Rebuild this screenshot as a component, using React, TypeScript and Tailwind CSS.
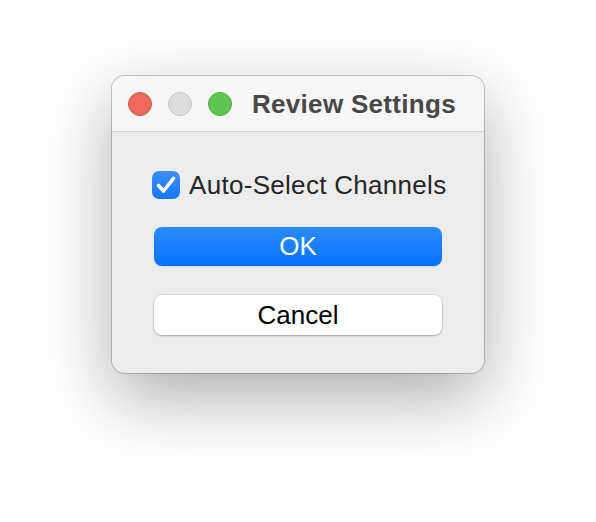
import { useState } from "react";

const font = { fontFamily: '"Liberation Sans", Arial, sans-serif' };

const TrafficLights = () => (
  <div className="flex items-center gap-4">
    <span className="h-6 w-6 rounded-full border border-[#d5574c] bg-[#ee6a5f]" />
    <span className="h-6 w-6 rounded-full border border-[#c4c4c4] bg-[#dcdcdc]" />
    <span className="h-6 w-6 rounded-full border border-[#4fa943] bg-[#60c454]" />
  </div>
);

const Checkbox = ({ checked, onToggle }: { checked: boolean; onToggle: () => void }) => (
  <button
    type="button"
    onClick={onToggle}
    className={
      checked
        ? "flex h-7 w-7 shrink-0 items-center justify-center rounded-[7px] bg-gradient-to-b from-[#3a90fb] to-[#1676f5]"
        : "flex h-7 w-7 shrink-0 items-center justify-center rounded-[7px] border border-[#b8b8b8] bg-white"
    }
  >
    {checked && (
      <svg viewBox="0 0 28 28" className="h-7 w-7">
        <path
          d="M6.5 14.5 L11.5 20 L21.5 7.5"
          fill="none"
          stroke="#fff"
          strokeWidth="3.6"
          strokeLinecap="round"
          strokeLinejoin="round"
        />
      </svg>
    )}
  </button>
);

export default function App() {
  const [autoSelect, setAutoSelect] = useState(true);

  return (
    <div className="h-[522px] w-[596px] bg-white pl-[112px] pt-[76px]" style={font}>
      <div className="w-[372px] overflow-hidden rounded-[13px] bg-[#ececec] shadow-[0_24px_70px_rgba(0,0,0,0.33),0_0_0_1px_rgba(0,0,0,0.2)]">
        {/* title bar */}
        <div className="flex h-[56px] items-center gap-5 border-b border-[#d4d4d4] bg-[#f6f6f6] pl-4">
          <TrafficLights />
          <span className="whitespace-nowrap text-[26px] font-bold leading-none tracking-[0.3px] text-[#484848]">
            Review Settings
          </span>
        </div>

        {/* body */}
        <div className="flex flex-col items-center px-[42px] pb-[38px] pt-[39px]">
          <label className="-ml-[2px] flex h-7 shrink-0 items-center gap-[9px] self-start whitespace-nowrap">
            <Checkbox checked={autoSelect} onToggle={() => setAutoSelect(!autoSelect)} />
            <span className="text-[26px] leading-none tracking-[0.3px] text-[#262626]">Auto-Select Channels</span>
          </label>

          <button
            type="button"
            className="mt-[28px] flex h-[39px] w-full items-center justify-center rounded-[8px] bg-gradient-to-b from-[#2a8bff] to-[#0671fe] text-[26px] text-white shadow-[0_1px_1px_rgba(0,0,0,0.12)]"
          >
            OK
          </button>

          <button
            type="button"
            className="mt-[29px] flex h-[40px] w-full items-center justify-center rounded-[8px] bg-white text-[26px] text-black shadow-[0_0_0_0.5px_rgba(0,0,0,0.12),0_1px_2px_rgba(0,0,0,0.25)]"
          >
            Cancel
          </button>
        </div>
      </div>
    </div>
  );
}
